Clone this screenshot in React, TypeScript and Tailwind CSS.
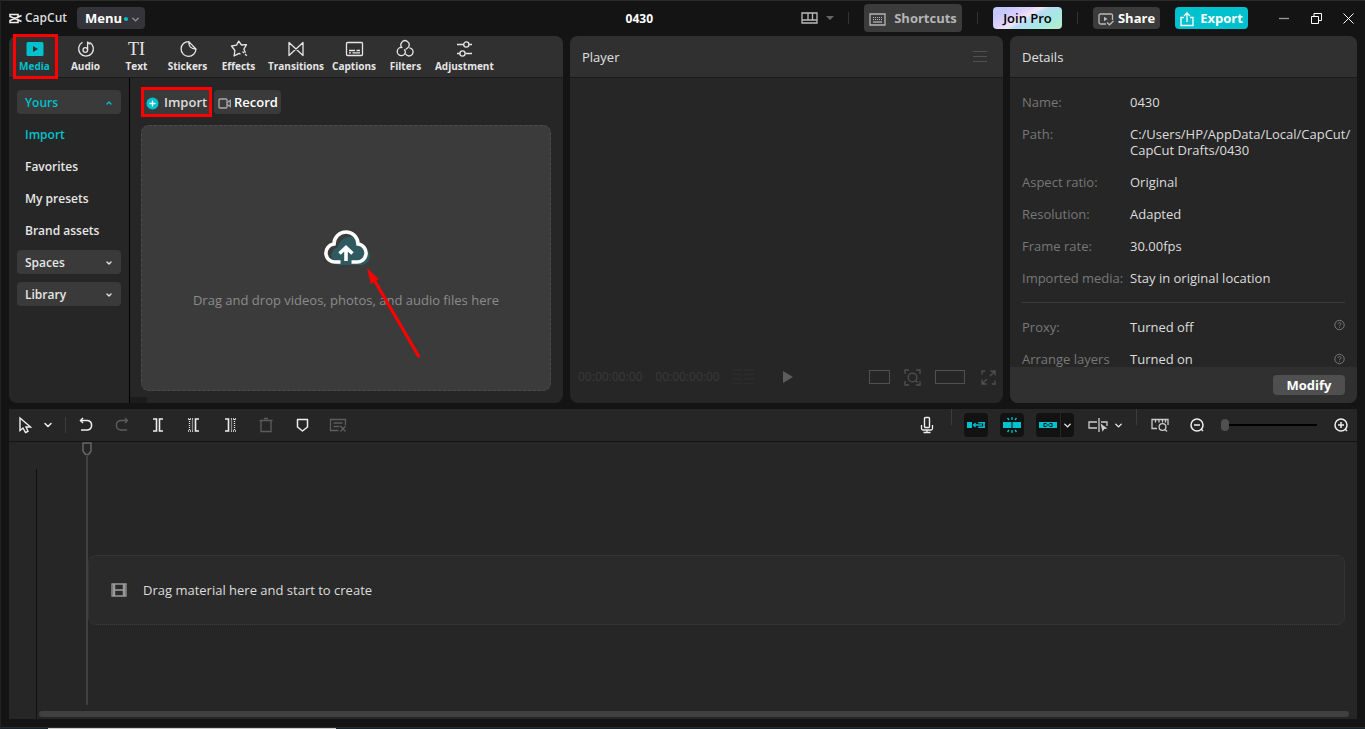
import React from 'react';
import { ChevronDown, ChevronUp } from 'lucide-react';

type IconProps = {
  w?: number;
  h?: number;
  children: React.ReactNode;
  className?: string;
};

const Icon = ({ w = 20, h = 20, children, className = '' }: IconProps) => (
  <svg
    width={w}
    height={h}
    viewBox={`0 0 ${w} ${h}`}
    fill="none"
    stroke="currentColor"
    strokeWidth="1.3"
    className={`shrink-0 ${className}`}
    aria-hidden="true"
  >
    {children}
  </svg>
);

const tabs = [
  {
    name: 'Media',
    icon: (
      <Icon>
        <rect x="1.5" y="3" width="17" height="14" rx="1.5" fill="#00c1cd" stroke="none" />
        <path d="M8 7v6l5-3z" fill="#303030" stroke="none" />
      </Icon>
    ),
  },
  {
    name: 'Audio',
    icon: (
      <Icon>
        <path d="M6.5 3.3a7.4 7.4 0 1 0 7 0" />
        <circle cx="9.3" cy="11" r="2.3" />
        <path d="M11.6 11V2.6c.2 1.6 1.2 2.200 2.800 2.600" />
      </Icon>
    ),
  },
  {
    name: 'Text',
    icon: <span className="font-['Liberation_Serif',serif] text-lg leading-5 font-normal">TI</span>,
  },
  {
    name: 'Stickers',
    icon: (
      <Icon>
        <path d="M10.8 2.6A7.4 7.4 0 1 0 17.9 10" />
        <path d="M10.8 2.6c-.3 4.8 2.2 7.4 7.1 7.4z" strokeLinejoin="round" />
      </Icon>
    ),
  },
  {
    name: 'Effects',
    icon: (
      <Icon>
        <path
          d="M11.5 15.3l-1.4-1-5 2.6.8-5.4L2.5 7l5-.9 2.2-4 2.8 3.9 5-.3-2.6 4.300 1.500 3.800"
          strokeLinejoin="round"
        />
        <path d="M13.5 12.5l1.5 1.5M16 15l1.800 1.800" />
      </Icon>
    ),
  },
  {
    name: 'Transitions',
    icon: (
      <Icon>
        <path d="M3 3.5v13l14-13v13z" strokeLinejoin="round" />
      </Icon>
    ),
  },
  {
    name: 'Captions',
    icon: (
      <Icon>
        <rect x="2.5" y="3.5" width="16" height="13" rx="1" />
        <path d="M5 11.5h6M12.5 11.5h3.5M5 13.800h2M8.500 13.800h7.500" />
      </Icon>
    ),
  },
  {
    name: 'Filters',
    icon: (
      <Icon>
        <path d="M7.3 8.9a4.1 4.1 0 1 1 6.2-.9c-.7 1-2 1.600-3 2.600" />
        <path d="M6.5 8.4a4.1 4.1 0 1 0 3.9 4.800c.1-1.200-.5-2-1.300-2.700" />
        <path d="M14.3 8.8a4.1 4.1 0 1 1-3.9 6" />
      </Icon>
    ),
  },
  {
    name: 'Adjustment',
    icon: (
      <Icon>
        <path d="M3 5.5h6.5M15 5.5h3M3 14.5h3M11.5 14.5H18" />
        <circle cx="12.3" cy="5.5" r="2.6" />
        <circle cx="8.5" cy="14.5" r="2.6" />
      </Icon>
    ),
  },
];

const sidebar = [
  { name: 'Yours', group: true, open: true },
  { name: 'Import', active: true },
  { name: 'Favorites' },
  { name: 'My presets' },
  { name: 'Brand assets' },
  { name: 'Spaces', group: true },
  { name: 'Library', group: true },
];

const details = [
  { label: 'Name:', value: '0430' },
  { label: 'Path:', value: 'C:/Users/HP/AppData/Local/CapCut/\nCapCut Drafts/0430' },
  { label: 'Aspect ratio:', value: 'Original' },
  { label: 'Resolution:', value: 'Adapted' },
  { label: 'Frame rate:', value: '30.00fps' },
  { label: 'Imported media:', value: 'Stay in original location' },
];

const editTools = [
  {
    name: 'Undo',
    icon: (
      <Icon>
        <path d="M7 3L4.5 5.5 7 8M4.5 5.5h7a4.8 4.8 0 0 1 0 9.5H5" strokeWidth="1.5" />
      </Icon>
    ),
  },
  {
    name: 'Redo',
    disabled: true,
    icon: (
      <Icon>
        <path d="M13 3l2.5 2.5L13 8M15.5 5.5h-7a4.8 4.8 0 0 0 0 9.5H15" />
      </Icon>
    ),
  },
  {
    name: 'Split',
    icon: (
      <Icon>
        <path d="M5 4h3.5v12H5M15 4h-3.5v12H15" strokeWidth="1.6" />
      </Icon>
    ),
  },
  {
    name: 'Delete left',
    icon: (
      <Icon>
        <path d="M15 4h-3.5v12H15" strokeWidth="1.6" />
        <path d="M4 4h4.5v12H4M5.5 4v12" strokeDasharray="1 1" />
      </Icon>
    ),
  },
  {
    name: 'Delete right',
    icon: (
      <Icon>
        <path d="M5 4h3.5v12H5" strokeWidth="1.6" />
        <path d="M16 4h-4.5v12H16M14.5 4v12" strokeDasharray="1 1" />
      </Icon>
    ),
  },
  {
    name: 'Delete',
    disabled: true,
    icon: (
      <Icon>
        <path d="M3.5 5.5h13M5 5.5v11h10v-11M8 3.5h4" />
      </Icon>
    ),
  },
  {
    name: 'Marker',
    icon: (
      <Icon>
        <path d="M5.5 4.5h10V12l-5 4-5-4z" strokeWidth="1.5" strokeLinejoin="round" />
      </Icon>
    ),
  },
  {
    name: 'Remove captions',
    disabled: true,
    icon: (
      <Icon>
        <path d="M17.5 10V4.5h-15v11h8M5.5 8h9M5.5 11.5h6M12.5 11l5 5.5M17.5 11l-5 5.5" />
      </Icon>
    ),
  },
];

const HelpIcon = () => (
  <Icon w={11} h={12} className="text-[#777]">
    <circle cx="5.5" cy="6" r="4.7" strokeWidth="1" />
    <path d="M4.1 5c0-2 2.900-1.800 2.900 0 0 1-1.500 1-1.500 2M5.500 7.800v1" strokeWidth="1" />
  </Icon>
);

const TitleBar = () => (
  <header className="flex h-9 shrink-0 items-center border-t border-[#2a2a2a] pr-[11px] pb-px pl-2 text-[#ddd]">
    <div className="flex w-[68px] items-center gap-[3px] text-xs font-semibold">
      <Icon w={13} h={11} className="text-[#eee]">
        <path d="M12.5 2.5L9 4.3V1.5H1v2l11.5 5M12.5 8.5L9 6.7v2.8H1v-2l11.5-5" strokeWidth="1.6" />
      </Icon>
      CapCut
    </div>
    <button className="flex h-[22px] w-[68px] items-center rounded bg-[#34343a] pt-0.5 pl-2 text-[13px] font-bold text-white">
      Menu
      <span className="ml-0.5 size-1 rounded-full bg-[#00c1cd]" />
      <ChevronDown size={11} strokeWidth={3} className="ml-0.5 text-[#999]" />
    </button>
    <h1 className="mr-[148px] ml-auto pt-0.5 text-xs font-bold text-white">0430</h1>
    <button className="flex items-center gap-2" aria-label="Layout">
      <Icon w={17} h={12} className="text-[#bbb]">
        <path d="M1 1h15v10H1zM1 8h15M7 1v7M11.5 1v7" />
      </Icon>
      <Icon w={8} h={4} className="text-[#666]">
        <path d="M0 0h8L4 4z" fill="currentColor" stroke="none" />
      </Icon>
    </button>
    <span className="mr-[15px] ml-3.5 h-3 w-px bg-[#333]" />
    <button className="flex h-7 w-[98px] items-center justify-center gap-2 rounded bg-[#3b3b3b] pt-0.5 text-[13px] font-bold text-[#b5b5b5]">
      <Icon w={17} h={13}>
        <path d="M1 1h15v11H1z" />
        <path d="M4 4.5h9M4 6.5h9" strokeWidth="1" strokeDasharray="1 1" />
        <path d="M4 9h9" />
      </Icon>
      Shortcuts
    </button>
    <span className="mx-[15px] h-3 w-px bg-[#333]" />
    <button className="h-[22px] w-[69px] rounded bg-[linear-gradient(150deg,#c5c8ff_15%,#ddd0fb_35%,#f1e6f6_46%,#b9dcf5_54%,#a5e9e3_72%,#b9ecc8_100%)] pt-0.5 text-[13px] font-semibold text-black">
      Join Pro
    </button>
    <span className="mx-[15px] h-3 w-px bg-[#333]" />
    <button className="flex h-[22px] w-[67px] items-center justify-center gap-1 rounded bg-[#3b3b3b] pt-0.5 text-[13px] font-bold text-white">
      <Icon w={16} h={13} className="text-[#bbb]">
        <path d="M14.5 7V2.5q0-1.5-1.5-1.5H2.5Q1 1 1 2.5v7Q1 11 2.5 11H8" />
        <path d="M6 3.8v4.4L9.5 6z" fill="currentColor" stroke="none" />
        <path d="M9 9.5l2.5 2.3L15.5 8" />
      </Icon>
      Share
    </button>
    <button className="ml-[15px] flex h-[22px] w-[73px] items-center justify-center gap-1.5 rounded bg-[#00c1cd] pt-0.5 text-[13px] font-bold text-white">
      <Icon w={14} h={15}>
        <path d="M4 5.5H1v8h12v-8h-3M7 10V1.5M4 4l3-3 3 3" />
      </Icon>
      Export
    </button>
    <div className="ml-[31px] flex items-center gap-[21px]">
      <button aria-label="Minimize">
        <Icon w={11} h={11} className="text-[#999]">
          <path d="M0 5.5h10" />
        </Icon>
      </button>
      <button aria-label="Restore">
        <Icon w={11} h={11} className="text-white">
          <path d="M.5 3.5h7v7h-7zM3 3.5v-3h7.5v7H8" strokeWidth="1" />
        </Icon>
      </button>
      <button aria-label="Close">
        <Icon w={11} h={11} className="text-white">
          <path d="M.5.5l10 10M10.5.5l-10 10" strokeWidth="1" />
        </Icon>
      </button>
    </div>
  </header>
);

const MediaPanel = () => (
  <section className="flex flex-col rounded-lg bg-[#262626]">
    <nav className="flex h-[42px] shrink-0 rounded-t-lg border-b border-[#1b1b1b] bg-[#303030]">
      {tabs.map((tab) => (
        <button
          key={tab.name}
          className={`relative flex min-w-[51px] flex-col items-center px-1 pt-[3px] text-[10px] leading-[14px] font-bold ${
            tab.name === 'Media' ? 'text-[#00c1cd]' : 'text-[#e6e6e6]'
          }`}
        >
          {tab.icon}
          {tab.name}
          {tab.name === 'Media' && (
            <span className="absolute -top-0.5 left-1 h-[45px] w-[45px] border-3 border-[#ff0000]" />
          )}
        </button>
      ))}
    </nav>

    <div className="flex min-h-0 flex-1">
      <aside className="flex w-[121px] flex-col gap-2 border-r border-black px-2 pt-3">
        {sidebar.map((item) => (
          <button
            key={item.name}
            className={`flex h-6 items-center justify-between rounded px-2 pt-0.5 text-xs font-semibold ${
              item.group ? 'bg-[#3a3a3a]' : ''
            } ${item.active || item.open ? 'text-[#00c1cd]' : 'text-[#e6e6e6]'}`}
          >
            {item.name}
            {item.group && (item.open ? <ChevronUp size={8} strokeWidth={4} /> : <ChevronDown size={8} strokeWidth={4} />)}
          </button>
        ))}
      </aside>

      <div className="flex min-w-0 flex-1 flex-col">
        <div className="flex gap-[3px] px-3 pt-3 text-[13px] font-semibold">
          <button className="relative flex h-6 w-[69px] items-center gap-[5px] rounded bg-[#3a3a3a] pt-0.5 pl-1 text-[#ddd]">
            <Icon w={13} h={13}>
              <circle cx="6.5" cy="6.5" r="6" fill="#00c1cd" stroke="none" />
              <path d="M6.5 3.5v6M3.5 6.5h6" stroke="#fff" />
            </Icon>
            Import
            <span className="absolute -inset-x-px -inset-y-[3px] border-3 border-[#ff0000]" />
          </button>
          <button className="flex h-6 w-[67px] items-center gap-[3px] rounded bg-[#3a3a3a] pt-0.5 pl-1 text-white">
            <Icon w={13} h={11} className="text-[#aaa]">
              <rect x="1" y="1" width="8" height="9" rx="1" />
              <path d="M9 4.5L12.3 2.5v6L9 6.5" />
            </Icon>
            Record
          </button>
        </div>

        <div className="relative mt-[11px] mr-3 mb-1.5 ml-[11px] flex flex-1 flex-col items-center rounded-lg border border-dashed border-[#4c4c4c] bg-[#3b3b3b]">
          <Icon w={48} h={38} className="mt-[103px]">
            <path
              d="M17 36a9 9 0 0 1-1.5-17.5 13 13 0 0 1 25.5-.5A9.200 9.200 0 0 1 40 36z"
              fill="#2f5a5f"
              stroke="none"
            />
            <path
              d="M18.5 33H14A9 9 0 0 1 12 15a12 12 0 0 1 24 0A9 9 0 0 1 34 33h-4.500"
              stroke="#fff"
              strokeWidth="3.6"
            />
            <path d="M24 32V18.500M17.500 24.500l6.500-6 6.500 6" stroke="#fff" strokeWidth="3.6" />
          </Icon>
          <p className="mt-[25px] text-[13px] leading-4 text-[#8b8b8b]">Drag and drop videos, photos, and audio files here</p>
          <svg className="absolute top-[141px] left-[223px]" width="58" height="94" viewBox="0 0 58 94" aria-hidden="true">
            <path d="M53.500 89L8 11" stroke="#f00" strokeWidth="3.2" strokeLinecap="round" />
            <path d="M2 1l11.5 11L6 17z" fill="#f00" />
          </svg>
        </div>
        <div className="h-1.5 w-[17px] bg-[#1c1c1c]" />
      </div>
    </div>
  </section>
);

const PlayerPanel = () => (
  <section className="flex flex-col rounded-lg bg-[#262626]">
    <div className="flex h-[42px] shrink-0 items-center justify-between rounded-t-lg border-b border-[#1b1b1b] bg-[#303030] px-3">
      <h2 className="text-[13px] leading-4 text-[#e0e0e0]">Player</h2>
      <button aria-label="Player menu" className="mr-1 text-[#505050]">
        <Icon w={14} h={12}>
          <path d="M0 .5h14M0 5.5h14M0 10.5h14" strokeWidth="1" />
        </Icon>
      </button>
    </div>
    <div className="mt-auto flex h-[52px] items-center pr-[7px] pl-2 text-xs text-[#3a3a3a]">
      <span>00:00:00:00</span>
      <span className="ml-[13px]">00:00:00:00</span>
      <Icon w={22} h={16} className="ml-3 text-[#2c2c2c]">
        <path d="M0 1h10M12 1h10M0 5.5h10M12 5.5h10M0 10h10M12 10h10M0 14.5h10M12 14.5h10" />
      </Icon>
      <button aria-label="Play" className="ml-[29px] text-[#5c5c5c]">
        <Icon w={11} h={12}>
          <path d="M0 0v12l10-6z" fill="currentColor" stroke="none" />
        </Icon>
      </button>
      <div className="ml-auto flex items-center gap-3.5 text-[#505050]">
        <Icon w={21} h={14}>
          <rect x=".5" y=".5" width="20" height="13" strokeWidth="1" />
        </Icon>
        <Icon w={17} h={17}>
          <path d="M1 5V1h4M12 1h4v4M16 12v4h-4M5 16H1v-4M11.5 11.5l2 2" />
          <circle cx="8.5" cy="8.5" r="4.3" />
        </Icon>
        <Icon w={30} h={14}>
          <rect x=".5" y=".5" width="29" height="13" strokeWidth="1" />
        </Icon>
        <Icon w={15} h={15} className="ml-0.5">
          <path d="M1 4.5V1h3M9.5 1H14v4.5M14 10.5V14h-3M5.5 14H1V9.5M9 6l4.500-4.500M6 9l-4.500 4.500" />
        </Icon>
      </div>
    </div>
  </section>
);

const DetailsPanel = () => (
  <section className="flex min-h-0 flex-col overflow-hidden rounded-lg bg-[#262626] text-[13px] leading-4">
    <div className="flex h-[42px] shrink-0 items-center border-b border-[#1b1b1b] bg-[#303030] px-3">
      <h2 className="text-[#e0e0e0]">Details</h2>
    </div>
    <div className="min-h-0 flex-1 overflow-hidden px-3 pt-4">
      <dl className="flex flex-col gap-4 border-b border-[#3a3a3a] pb-4">
        {details.map((row) => (
          <div key={row.label} className="flex">
            <dt className="w-[108px] shrink-0 text-[#777]">{row.label}</dt>
            <dd className="whitespace-pre text-[#ddd]">{row.value}</dd>
          </div>
        ))}
      </dl>
      <dl className="flex flex-col gap-4 pt-4">
        <div className="flex">
          <dt className="w-[108px] text-[#777]">Proxy:</dt>
          <dd className="flex flex-1 justify-between text-[#ddd]">
            Turned off <HelpIcon />
          </dd>
        </div>
        <div className="flex">
          <dt className="w-[108px] text-[#777]">Arrange layers</dt>
          <dd className="flex flex-1 items-center justify-between text-[#ddd]">
            Turned on <HelpIcon />
          </dd>
        </div>
      </dl>
    </div>
    <div className="flex h-9 shrink-0 items-center justify-end bg-[#303030] px-3">
      <button className="h-5 w-[72px] rounded bg-[#4f4f4f] text-[13px] font-bold text-white">Modify</button>
    </div>
  </section>
);

const TimelineToolbar = () => (
  <div className="flex h-[33px] shrink-0 items-center border-b border-[#141414] px-2 text-[#eee]">
    <button aria-label="Select">
      <Icon w={16} h={18}>
        <path d="M3 2v12.5l3-2.5 2.5 4.5 2.5-1.2-2-4.300h4.500z" strokeWidth="1.4" />
      </Icon>
    </button>
    <button aria-label="More select tools" className="ml-[9px]">
      <ChevronDown size={12} strokeWidth={3} />
    </button>
    <span className="mr-0.5 ml-[11px] h-4 w-px bg-[#3c3c3c]" />
    {editTools.map((tool) => (
      <button
        key={tool.name}
        aria-label={tool.name}
        disabled={tool.disabled}
        className="flex w-9 justify-center disabled:text-[#5c5c5c]"
      >
        {tool.icon}
      </button>
    ))}

    <button aria-label="Record voiceover" className="ml-auto">
      <Icon w={14} h={18}>
        <rect x="4.5" y="1.5" width="5" height="10" rx="1" strokeWidth="1.4" />
        <path d="M1.5 9v3.5q0 1.5 1.5 1.5h8q1.5 0 1.5-1.5V9M7 14v2.5M3.5 16.5h7" />
      </Icon>
    </button>
    <span className="mr-3 ml-[17px] h-4 w-px self-start bg-[#3c3c3c]" />
    <button aria-label="Main track magnet" className="flex h-6 w-6 items-center justify-center rounded bg-[#121212] text-[#00c1cd]">
      <Icon w={18} h={8}>
        <path d="M0 1h5v6H0z" fill="currentColor" stroke="none" />
        <path d="M18 1.8h-6.500M18 6.200h-6.500M17 1v6M12 1v1.500M12 5.500V7" strokeWidth="1.6" />
        <path d="M8.500 2L6.500 4l2 2M7 4h8" />
      </Icon>
    </button>
    <button aria-label="Auto snapping" className="ml-3 flex h-6 w-6 items-center justify-center rounded bg-[#121212] text-[#00c1cd]">
      <Icon w={18} h={16}>
        <path d="M0 5h8.500v6H0zM9.500 5H18v6H9.500z" fill="currentColor" stroke="none" />
        <path d="M9 0v3M9 13v3M4.500 1l1.500 2M13.500 1L12 3M4.500 15L6 13M13.500 15L12 13" />
      </Icon>
    </button>
    <div className="ml-3 flex gap-px">
      <button aria-label="Linkage" className="flex h-6 w-6 items-center justify-center rounded-l bg-[#121212] text-[#00c1cd]">
        <Icon w={18} h={8}>
          <path d="M0 1h18v6H0z" fill="currentColor" stroke="none" />
          <path d="M7.500 2.500H5v3h2.500M10.500 2.500H13v3h-2.500M7.500 4h3" stroke="#121212" strokeWidth="1" />
        </Icon>
      </button>
      <button aria-label="Linkage options" className="flex h-6 w-[13px] items-center justify-center rounded-r bg-[#121212]">
        <ChevronDown size={11} strokeWidth={3} />
      </button>
    </div>
    <button aria-label="Preview axis" className="ml-3.5 flex items-center gap-1">
      <Icon w={21} h={16} className="text-[#ccc]">
        <path d="M9 5H1v6h8M11 1v14M13 5h6v4" />
        <path d="M12.500 6.500l7 5-3.200.4-1.800 2.800z" fill="currentColor" stroke="none" />
      </Icon>
      <ChevronDown size={11} strokeWidth={3} />
    </button>
    <span className="mr-3.5 ml-3 h-4 w-px self-start bg-[#3c3c3c]" />
    <button aria-label="Zoom to fit">
      <Icon w={18} h={14} className="text-[#ccc]">
        <path d="M6 10.500H1V1.500h16V7M4.500 1.500v3M8 1.500v3M11.500 1.500v3M14.500 1.500v3M14 11.500l2 2" />
        <circle cx="11.5" cy="9" r="3.4" />
      </Icon>
    </button>
    <button aria-label="Zoom out" className="ml-5">
      <Icon w={16} h={16}>
        <circle cx="8" cy="8" r="6" strokeWidth="1.5" />
        <path d="M5 8h6M12 12l2 2" strokeWidth="1.5" />
      </Icon>
    </button>
    <input
      type="range"
      min="0"
      max="100"
      defaultValue="0"
      aria-label="Timeline zoom"
      className="mx-4 h-3 w-24 appearance-none bg-[linear-gradient(#000,#000)] bg-[length:100%_2px] bg-center bg-no-repeat [&::-webkit-slider-thumb]:h-3 [&::-webkit-slider-thumb]:w-2 [&::-webkit-slider-thumb]:appearance-none [&::-webkit-slider-thumb]:rounded-sm [&::-webkit-slider-thumb]:bg-[#505050]"
    />
    <button aria-label="Zoom in">
      <Icon w={16} h={16}>
        <circle cx="8" cy="8" r="6" strokeWidth="1.5" />
        <path d="M5 8h6M8 5v6M12 12l2 2" strokeWidth="1.5" />
      </Icon>
    </button>
  </div>
);

const Timeline = () => (
  <section className="mx-2 mt-1.5 flex min-h-0 flex-1 flex-col bg-[#262626]">
    <TimelineToolbar />
    <div className="flex min-h-0 flex-1">
      <div className="mt-[27px] w-7 shrink-0 border-r border-[#111]" />
      <div className="relative flex min-w-0 flex-1 flex-col">
        <div className="mt-[113px] mr-3 ml-[51px] flex h-[70px] items-center gap-4 rounded-lg border border-dotted border-[#3c3c3c] bg-[#2a2a2a] pl-[22px] text-[13px] leading-4 text-[#ddd]">
          <Icon w={16} h={14} className="text-[#999]">
            <path d="M1 1h14v12H1z" />
            <path d="M3 1v12M13 1v12" strokeWidth="2.5" />
            <path d="M4 7h8" strokeWidth="1.6" />
          </Icon>
          Drag material here and start to create
        </div>
        <div className="absolute top-0 bottom-3.5 left-[45px] flex flex-col items-center text-[#666]">
          <Icon w={10} h={14}>
            <path d="M1 1h8v8l-2.500 3.500h-3L1 9z" strokeWidth="1.5" strokeLinejoin="round" />
          </Icon>
          <span className="w-0.5 flex-1 bg-[#404040]" />
        </div>
        <div className="mt-auto mr-2 mb-0.5 ml-0.5 h-1.5 rounded-full bg-[#404040]" />
      </div>
    </div>
  </section>
);

const App = () => {
  return (
    <div className="flex h-screen flex-col overflow-hidden border-l border-[#222] bg-[#141414] font-['Open_Sans','Noto_Sans',sans-serif]">
      <TitleBar />
      <main className="mx-2 grid h-[367px] shrink-0 grid-cols-[554fr_433fr_347fr] gap-[7px]">
        <MediaPanel />
        <PlayerPanel />
        <DetailsPanel />
      </main>
      <Timeline />
      <footer className="mt-2 flex h-0.5 shrink-0 border-t border-[#2b2b2b] bg-[#15222b]">
        <span className="ml-[47px] w-72 bg-[#ccc]" />
      </footer>
    </div>
  );
};

export default App;
